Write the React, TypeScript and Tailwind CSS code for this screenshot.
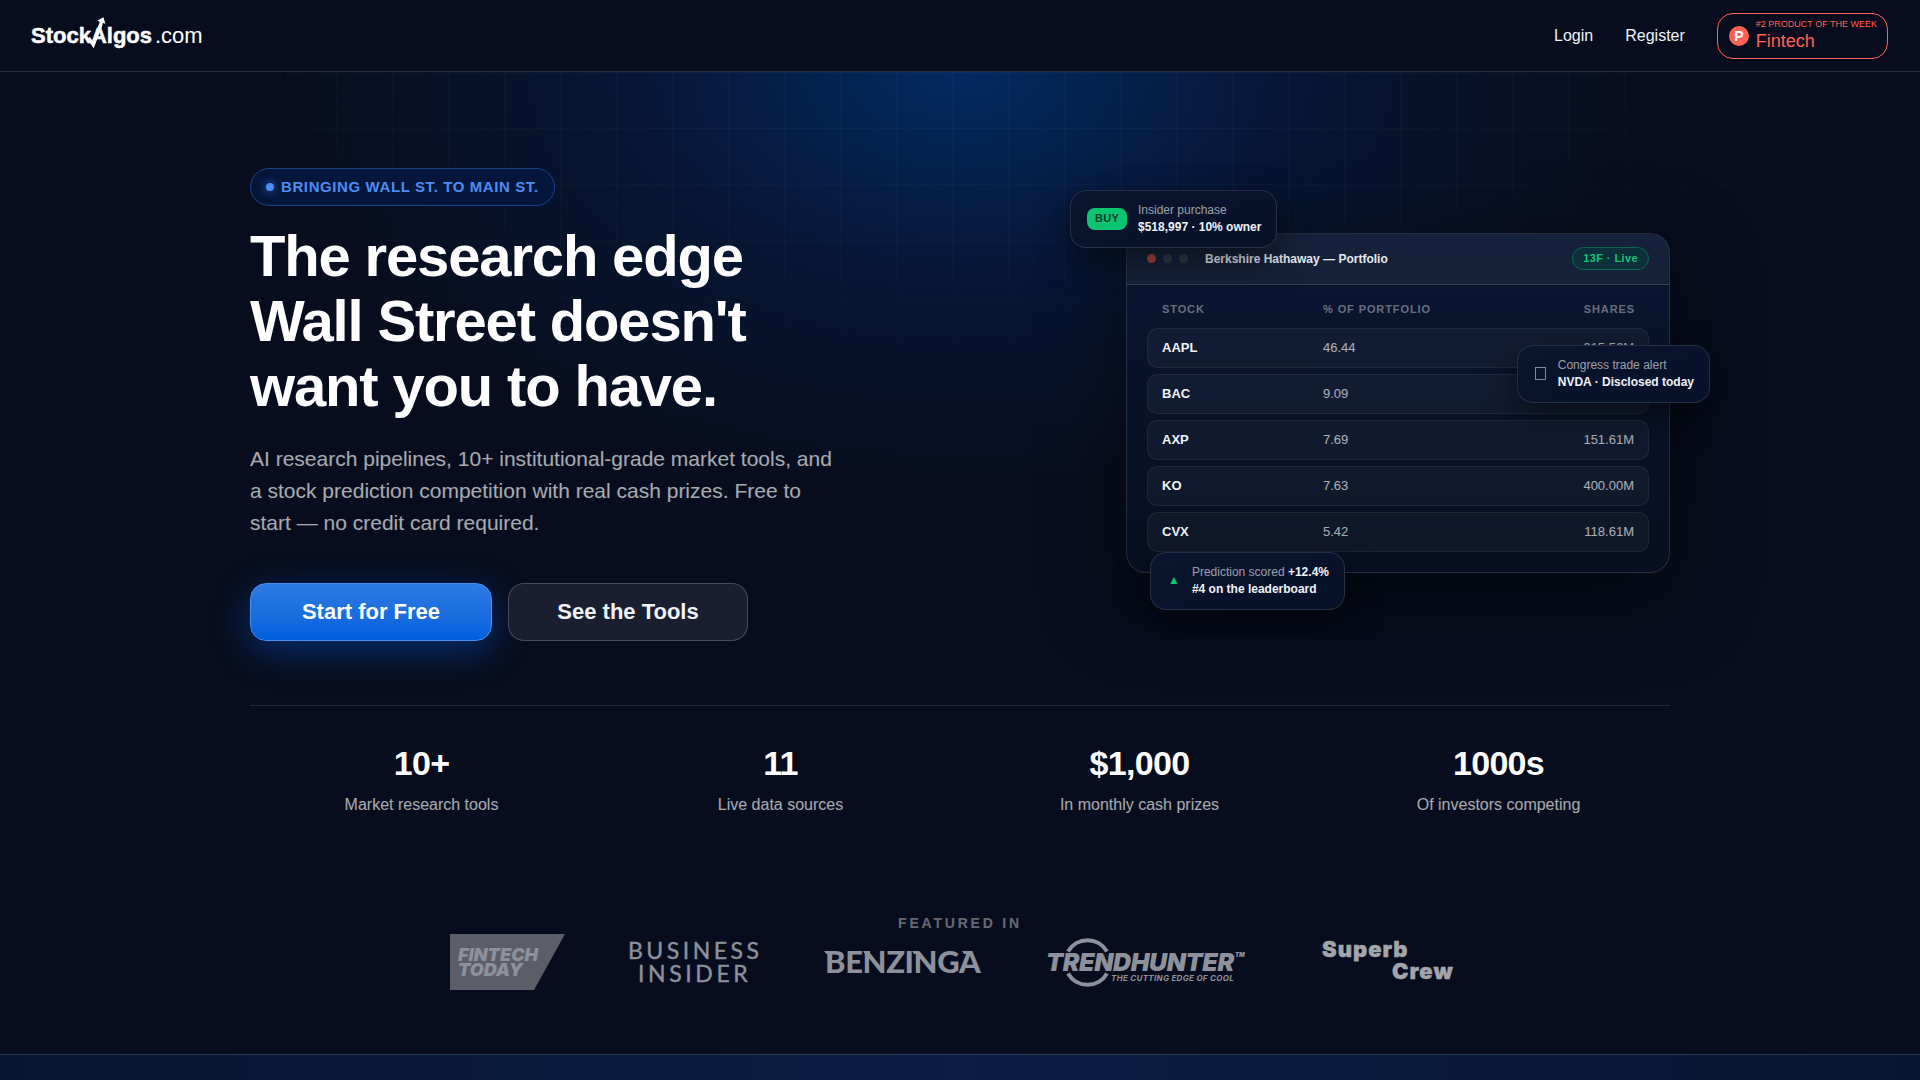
import type { ReactNode } from 'react'

const stats = [
  { value: '10+',    label: 'Market research tools'  },
  { value: '11',     label: 'Live data sources'      },
  { value: '$1,000', label: 'In monthly cash prizes' },
  { value: '1000s',  label: 'Of investors competing' },
]

const holdings = [
  { stock: 'AAPL', pct: '46.44', shares: '915.56M' },
  { stock: 'BAC',  pct: '9.09',  shares: '605.27M' },
  { stock: 'AXP',  pct: '7.69',  shares: '151.61M' },
  { stock: 'KO',   pct: '7.63',  shares: '400.00M' },
  { stock: 'CVX',  pct: '5.42',  shares: '118.61M' },
]

function Logo() {
  return (
    <svg width="172" height="40" viewBox="0 0 172 40" role="img" aria-label="StockAlgos.com" className="overflow-visible">
      <g fill="#fff" fontFamily="Liberation Sans, Arial, sans-serif" fontSize="22">
        <text x="-1" y="27" fontWeight="700" stroke="#fff" strokeWidth="0.5">StockAlgos</text>
        <text x="123" y="27">.com</text>
      </g>
      {/* Zigzag stroke that runs up through the A */}
      <path d="M56.5 22 L61.2 28.5 L69 8" fill="none" stroke="#fff" strokeWidth="3.6" />
      <path d="M65.6 4.6 L71.4 1.2 L73.4 7.8 L70.8 7 L69.6 10 L66.8 9 L67.8 6 Z" fill="#fff" />
    </svg>
  )
}

function Header() {
  return (
    <header className="flex h-[72px] items-center justify-between border-b border-white/12 bg-[#070d1e] px-8">
      <a href="#home"><Logo /></a>
      <nav className="flex items-center gap-8 text-base text-[#f0f3f8]">
        <a href="#login">Login</a>
        <a href="#register">Register</a>
        <a href="#product-hunt" className="flex h-[46px] items-center gap-[7px] rounded-2xl border border-[#ff6154] pl-[11px] pr-2.5 text-[#ff6154]">
          <span className="flex size-5 items-center justify-center rounded-full bg-[#ff6154] text-sm font-bold text-white">P</span>
          <span className="flex flex-col">
            <span className="text-[9px] leading-[11px]">#2 PRODUCT OF THE WEEK</span>
            <span className="text-lg leading-[22px]">Fintech</span>
          </span>
        </a>
      </nav>
    </header>
  )
}

function Chip({ className, icon, children }: { className: string; icon: ReactNode; children: ReactNode }) {
  return (
    <div className={`absolute flex h-[58px] items-center rounded-2xl border border-white/12 bg-linear-to-br from-[#0a152f] to-[#071029] px-[15px] text-xs leading-[17px] whitespace-nowrap text-white/60 shadow-[0_12px_32px_rgba(0,0,0,0.5)] ${className}`}>
      {icon}
      <div>{children}</div>
    </div>
  )
}

function PortfolioCard() {
  const cell = 'border-y border-white/6 bg-white/4 px-3.5'

  return (
    <div className="relative mb-1 w-[544px] shrink-0">
      <div className="overflow-hidden rounded-[20px] border border-white/12 bg-linear-to-b from-[#0a1632] to-[#060e20] shadow-[0_24px_80px_rgba(0,0,0,0.5)]">
        <div className="flex h-[51px] items-center justify-between border-b border-white/14 bg-white/5 px-5">
          <div className="flex items-center gap-[7px]">
            <span className="size-[9px] rounded-full bg-[#a8433f]" />
            <span className="size-[9px] rounded-full bg-[#2f3a4a]" />
            <span className="size-[9px] rounded-full bg-[#2f3a4a]" />
            <h2 className="ml-2.5 text-xs font-bold text-[#e6e9f0]">Berkshire Hathaway — Portfolio</h2>
          </div>
          <span className="flex h-[23px] items-center rounded-full border border-[#0b6b4d] bg-[#0d2f3b] px-2.5 text-[11px] font-bold tracking-[0.4px] text-[#0cc472]">13F · Live</span>
        </div>

        <div className="px-5 pt-1.5 pb-3.5">
          <table className="w-full border-separate border-spacing-x-0 border-spacing-y-1.5">
            <thead>
              <tr className="h-[25px] text-[11px] tracking-[0.9px] text-white/40">
                <th className="w-[162px] px-[15px] text-left font-bold">STOCK</th>
                <th className="px-3.5 text-left font-bold">% OF PORTFOLIO</th>
                <th className="px-3.5 text-right font-bold">SHARES</th>
              </tr>
            </thead>
            <tbody>
              {holdings.map(({ stock, pct, shares }) => (
                <tr key={stock} className="h-10 text-[13px] text-white/65">
                  <td className={`${cell} rounded-l-[10px] border-l font-bold text-[#f0f3f8]`}>{stock}</td>
                  <td className={cell}>{pct}</td>
                  <td className={`${cell} rounded-r-[10px] border-r text-right`}>{shares}</td>
                </tr>
              ))}
            </tbody>
          </table>
        </div>
      </div>

      <Chip
        className="-top-[43px] -left-14"
        icon={<span className="mr-[11px] ml-px flex h-[22px] w-10 items-center justify-center rounded-lg bg-[#0cc472] text-[11px] font-bold tracking-wide text-[#063d2b]">BUY</span>}
      >
        <p>Insider purchase</p>
        <p className="font-bold text-[#f0f3f8]">$518,997 · 10% owner</p>
      </Chip>
      <Chip
        className="top-28 -right-10"
        icon={<span className="mr-3 ml-0.5 h-[13px] w-[11px] border border-white/50" />}
      >
        <p>Congress trade alert</p>
        <p className="font-bold text-[#f0f3f8]">NVDA · Disclosed today</p>
      </Chip>
      <Chip
        className="-bottom-[37px] left-6"
        icon={<span className="mr-3 ml-0.5 text-[#0cc472]">▲</span>}
      >
        <p>Prediction scored <b className="text-[#f0f3f8]">+12.4%</b></p>
        <p className="font-bold text-[#f0f3f8]">#4 on the leaderboard</p>
      </Chip>
    </div>
  )
}

function PressLogos() {
  return (
    <div className="flex items-center justify-center gap-16 text-[#8d919c]">
      {/* Fintech Today */}
      <svg width="115" height="56" viewBox="0 0 115 56" role="img" aria-label="Fintech Today">
        <path d="M0 0H115L84 56H0Z" fill="#5b5e68" />
        <g fill="currentColor" fontFamily="Inter, sans-serif" fontSize="18" fontWeight="900" fontStyle="italic">
          <text x="8" y="27">FINTECH</text>
          <text x="8" y="42">TODAY</text>
        </g>
      </svg>

      {/* Business Insider */}
      <svg width="130" height="56" viewBox="0 0 130 56" role="img" aria-label="Business Insider" className="overflow-visible">
        <g fill="currentColor" stroke="currentColor" strokeWidth="0.4" fontFamily="Lato, sans-serif" fontSize="23">
          <text x="-1" y="25" letterSpacing="3.5">BUSINESS</text>
          <text x="9" y="48" letterSpacing="3.6">INSIDER</text>
        </g>
      </svg>

      {/* Benzinga */}
      <svg width="160" height="56" viewBox="0 0 160 56" role="img" aria-label="Benzinga" className="overflow-visible">
        <text x="2" y="39" fill="currentColor" fontFamily="Lato, sans-serif" fontSize="31" fontWeight="900" letterSpacing="-0.4">BENZINGA</text>
        <path d="M1 17H9V20H3.5ZM40 17H47V20H42ZM89 17H96V20H91ZM139 17H148V20H141Z" fill="currentColor" />
      </svg>

      {/* Trend Hunter */}
      <svg width="199" height="56" viewBox="0 0 199 56" role="img" aria-label="Trend Hunter" className="overflow-visible">
        <path d="M21 17.5A22.5 22.5 0 0 1 60 17.5M21 39.5A22.5 22.5 0 0 0 60 39.5" fill="none" stroke="currentColor" strokeWidth="4" />
        <g fill="currentColor" fontFamily="Inter, sans-serif" fontWeight="900" fontStyle="italic">
          <text x="-1" y="37" fontSize="25" letterSpacing="-0.4">TRENDHUNTER</text>
          <text x="64" y="47" fontSize="8" fontWeight="700" letterSpacing="0.3">THE CUTTING EDGE OF COOL</text>
          <text x="188" y="23" fontSize="6">TM</text>
        </g>
      </svg>

      {/* Superb Crew */}
      <svg width="160" height="56" viewBox="0 0 160 56" role="img" aria-label="Superb Crew">
        <g fill="#a3a5ac" stroke="#a3a5ac" strokeWidth="0.4" fontFamily="Inter, sans-serif" fontSize="22" fontWeight="900" letterSpacing="1">
          <text x="12" y="23">Superb</text>
          <text x="82" y="45">Crew</text>
        </g>
      </svg>
    </div>
  )
}

export default function App() {
  return (
    <div className="min-h-screen bg-[#070d1e] font-['Liberation_Sans',Arial,sans-serif] text-white">
      <Header />

      <main>
        <section className="relative bg-[radial-gradient(ellipse_680px_420px_at_50%_0,rgba(0,98,230,0.34),rgba(0,80,190,0.13)_50%,transparent)] px-8 pt-24 pb-16">
          {/* Grid overlay */}
          <div className="pointer-events-none absolute inset-0 bg-[linear-gradient(to_right,rgba(255,255,255,0.028)_1px,transparent_1px),linear-gradient(to_bottom,rgba(255,255,255,0.028)_1px,transparent_1px)] bg-size-[56px_56px] mask-[radial-gradient(ellipse_72%_44%_at_50%_0,#000_20%,transparent)]" />

          <div className="relative mx-auto max-w-[1420px]">
            <div className="flex items-center justify-between gap-12">
              <div className="max-w-[590px]">
                <p className="inline-flex h-[38px] items-center gap-[7px] rounded-full border border-[#1b4384] bg-[#04173a] px-[15px] text-[15px] font-bold tracking-[0.6px] text-[#4b8cf5]">
                  <span className="size-2 rounded-full bg-[#4b8cf5] shadow-[0_0_10px_#2f6fe0]" />
                  BRINGING WALL ST. TO MAIN ST.
                </p>
                <h1 className="mt-[17px] text-[58px] leading-[65px] font-bold tracking-[-0.02em]">
                  The research edge<br />Wall Street doesn't<br />want you to have.
                </h1>
                <p className="mt-[25px] text-[21px] leading-8 text-white/65">
                  AI research pipelines, 10+ institutional-grade market tools, and a stock prediction competition with real cash prizes. Free to start — no credit card required.
                </p>
                <div className="mt-11 flex gap-4 text-[22px] font-bold">
                  <a href="#signup" className="flex h-[58px] w-[242px] items-center justify-center rounded-2xl border border-[#4a8df0] bg-linear-to-b from-[#2f7be4] to-[#005fdc] pb-0.5 shadow-[0_10px_36px_rgba(0,95,220,0.42)]">Start for Free</a>
                  <a href="#tools" className="flex h-[58px] w-[240px] items-center justify-center rounded-2xl border border-white/20 bg-[#191f30] pb-0.5 text-[#f0f3f8]">See the Tools</a>
                </div>
              </div>

              <PortfolioCard />
            </div>

            <dl className="mt-16 grid grid-cols-4 gap-4 border-t border-white/10 pt-10 text-center">
              {stats.map(({ value, label }) => (
                <div key={label} className="flex flex-col-reverse gap-[13px]">
                  <dt className="text-base text-white/65">{label}</dt>
                  <dd className="text-[34px] leading-[34px] font-bold tracking-[-0.02em]">{value}</dd>
                </div>
              ))}
            </dl>

            <div className="mt-24">
              <h2 className="text-center text-sm leading-[21px] font-bold tracking-[0.2em] text-white/40">FEATURED IN</h2>
              <PressLogos />
            </div>
          </div>
        </section>

        <section className="min-h-[26px] border-t border-white/14 bg-linear-to-r from-[#08152f] via-[#0a1d42] to-[#08152f]" />
      </main>
    </div>
  )
}
